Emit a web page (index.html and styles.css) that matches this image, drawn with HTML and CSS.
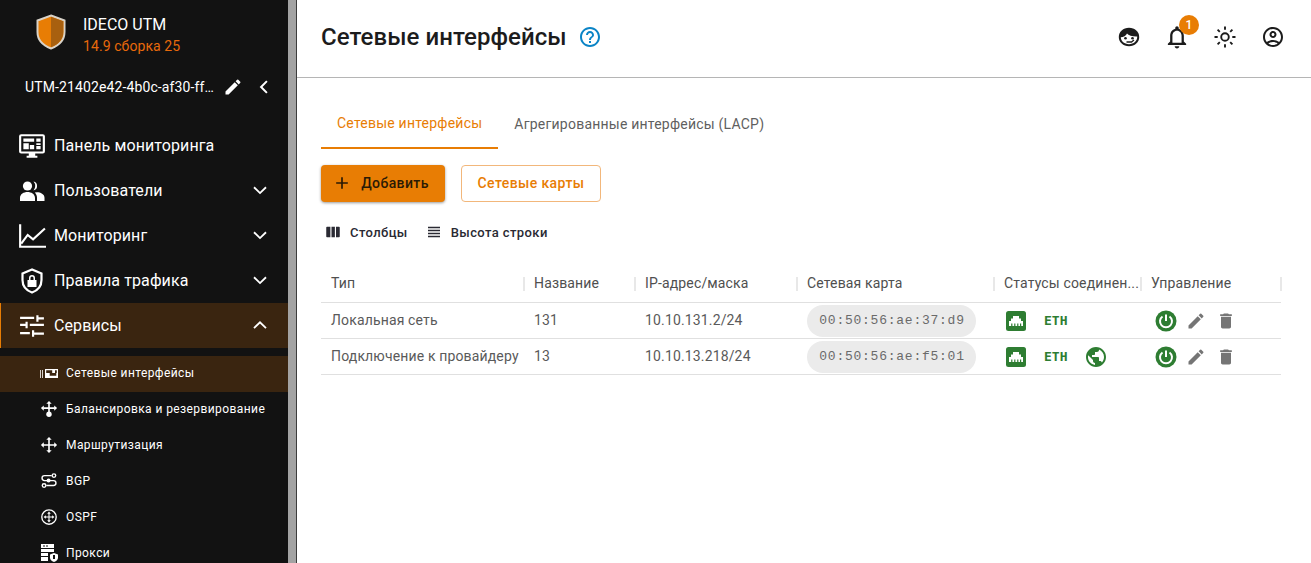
FILE: index.html
```html
<!DOCTYPE html>
<html lang="ru">
<head>
<meta charset="utf-8">
<title>Сетевые интерфейсы</title>
<link rel="stylesheet" href="styles.css">
</head>
<body>
<div class="app">
  <aside class="sidebar">
    <div class="brand">
      <svg class="logo" width="30" height="36" viewBox="0 0 30 36"><path d="M15 1.500 28.500 6.500V18c0 8-5.500 13.500-13.500 16.500C7 31.500 1.500 26 1.500 18V6.500Z" fill="#e87d04" stroke="#d8d2c8" stroke-width="2"/><path d="M15 2.800 27.300 7.300V18c0 7.300-5 12.500-12.300 15.200Z" fill="#a8600f"/></svg>
      <div class="brand-text">
        <div class="brand-name">IDECO UTM</div>
        <div class="brand-ver">14.9 сборка 25</div>
      </div>
    </div>
    <div class="host">
      <span class="host-name">UTM-21402e42-4b0c-af30-ff…</span>
      <svg class="ico20" viewBox="0 0 24 24"><path fill="#fff" d="M3 17.250V21h3.750L17.810 9.940l-3.750-3.750L3 17.250zM20.710 7.040a1 1 0 0 0 0-1.410l-2.340-2.340a1 1 0 0 0-1.410 0l-1.830 1.830 3.750 3.750 1.830-1.830z"/></svg>
      <svg class="ico20 host-back" viewBox="0 0 24 24"><path fill="none" stroke="#fff" stroke-width="2.400" d="M15.500 5 8.500 12l7 7"/></svg>
    </div>
    <nav class="nav">
      <a class="nav-item">
        <svg class="nav-ico" viewBox="0 0 26 24"><path fill="#fff" d="M3 1h20a2 2 0 0 1 2 2v14a2 2 0 0 1-2 2h-7v2h2v2H8v-2h2v-2H3a2 2 0 0 1-2-2V3a2 2 0 0 1 2-2zm0 2v14h20V3z"/><path fill="#fff" d="M5 5h10v3H5zM17 5h4v3h-4zM17 9.500h4V11h-4zM17 12h4v3h-4zM5 9.500h5V15H5zM11 11h4v4h-4z"/></svg>
        <span class="nav-label">Панель мониторинга</span>
      </a>
      <a class="nav-item">
        <svg class="nav-ico" viewBox="0 0 28 26"><circle cx="9.500" cy="8" r="4.600" fill="#fff"/><path fill="#fff" d="M15.500 3.600a4.500 4.500 0 0 1 0 8.800 6.500 6.500 0 0 0 0-8.800zM2 23v-3c0-4 3.800-6 7.500-6s7.500 2 7.500 6v3zM19 14.300c3.500 0 7.500 1.900 7.500 5.500V23H19v-3.200c0-2-.700-3.900-2.200-5.300z"/></svg>
        <span class="nav-label">Пользователи</span>
        <svg class="chev" viewBox="0 0 24 24"><path fill="none" stroke="#fff" stroke-width="2.200" d="M4.800 7.500 12 14.500l7.200-7"/></svg>
      </a>
      <a class="nav-item">
        <svg class="nav-ico" viewBox="0 0 26 24"><path fill="none" stroke="#fff" stroke-width="2" d="M2 1v21h24"/><path fill="none" stroke="#fff" stroke-width="2" d="M3 19l6-8 5 4L25 5"/></svg>
        <span class="nav-label">Мониторинг</span>
        <svg class="chev" viewBox="0 0 24 24"><path fill="none" stroke="#fff" stroke-width="2.200" d="M4.800 7.500 12 14.500l7.200-7"/></svg>
      </a>
      <a class="nav-item">
        <svg class="nav-ico" viewBox="0 0 24 26"><path fill="none" stroke="#fff" stroke-width="2.200" d="M12 1.500 2.500 5.500v6.500c0 6 4 10.500 9.500 12.500 5.500-2 9.500-6.500 9.500-12.500V5.500Z"/><path fill="#fff" d="M7.500 12h9v7h-9zM9 12V10a3 3 0 0 1 6 0v2h-1.500v-2a1.500 1.500 0 0 0-3 0v2z"/></svg>
        <span class="nav-label">Правила трафика</span>
        <svg class="chev" viewBox="0 0 24 24"><path fill="none" stroke="#fff" stroke-width="2.200" d="M4.800 7.500 12 14.500l7.200-7"/></svg>
      </a>
      <a class="nav-item nav-active">
        <svg class="nav-ico" viewBox="0 0 24 24"><path fill="#fff" d="M1 18.500v2h9v-2zM1 4.500v2h13v-2zM14 23v-2h9v-2h-9v-2h-2v6zM6 9v2H1v2h5v2h2V9zM23 13v-2H10v2zM16 9h2V7h5V5h-5V3h-2z" transform="translate(0 -1)"/></svg>
        <span class="nav-label">Сервисы</span>
        <svg class="chev" viewBox="0 0 24 24"><path fill="none" stroke="#fff" stroke-width="2.200" d="M4.800 14.500 12 7.500l7.200 7"/></svg>
      </a>
    </nav>
    <div class="subnav">
      <a class="sub-item sub-active">
        <svg class="sub-ico" viewBox="0 0 18 12"><path fill="#d8d2cc" d="M0 3h1v8H0zM2 3h1v8H2z"/><path fill="#fff" fill-rule="evenodd" d="M5 2h13v9H5zM6.200 3.200V6h3.500v2.800h6.600V6h.500V3.200h-1.800V6h-2.800V3.200z"/></svg>
        <span>Сетевые интерфейсы</span>
      </a>
      <a class="sub-item">
        <svg class="sub-ico" viewBox="-1 -1 20 20"><g fill="none" stroke="#fff" stroke-width="1.800"><path d="M9 2v12M2.500 8h13"/></g><path fill="#fff" d="M9 0l3 3.200H6zM0 8l3.200-3v6zM18 8l-3.200-3v6z"/><circle cx="9" cy="14.800" r="3" fill="#fff"/></svg>
        <span>Балансировка и резервирование</span>
      </a>
      <a class="sub-item">
        <svg class="sub-ico" viewBox="-1 -1 20 20"><g fill="none" stroke="#fff" stroke-width="1.800"><path d="M9 2v14M2 9h14"/></g><path fill="#fff" d="M9 0l3 3.200H6zM9 18l3-3.200H6zM0 9l3.200-3v6zM18 9l-3.200-3v6z"/></svg>
        <span>Маршрутизация</span>
      </a>
      <a class="sub-item">
        <svg class="sub-ico" viewBox="-1 -1 20 20"><g fill="none" stroke="#fff" stroke-width="1.500"><path d="M12 3H4a2.500 2.500 0 0 0 0 5.500h10a2.700 2.700 0 0 1 0 5.500H6"/><circle cx="14.500" cy="3" r="2"/><circle cx="3.500" cy="14" r="2"/></g><circle cx="8.500" cy="8.500" r="2.200" fill="#fff"/></svg>
        <span>BGP</span>
      </a>
      <a class="sub-item">
        <svg class="sub-ico" viewBox="-1 -1 20 20"><circle cx="9" cy="9" r="8" fill="none" stroke="#fff" stroke-width="1.500"/><path fill="#fff" d="M9 3l2 2.500H9.600v2.900h2.900V7L15 9l-2.500 2v-1.400H9.600v2.900H11L9 15l-2-2.500h1.400V9.600H5.500V11L3 9l2.500-2v1.400h2.900V5.500H7z"/></svg>
        <span>OSPF</span>
      </a>
      <a class="sub-item">
        <svg class="sub-ico" viewBox="0 0 18 18"><path fill="#fff" d="M1 0h13v4H1zM1 5h13v3H1zM1 9h7v3H1zM1 13h7v4H1z"/><path fill="#fff" d="M14 9l4 1.500v3c0 2-1.500 3.500-4 4.500-2.500-1-4-2.500-4-4.500v-3z"/><path fill="#121212" d="M13 11h2v4h-2zM3 1.500h2v1H3zM6 1.500h2v1H6z"/></svg>
        <span>Прокси</span>
      </a>
    </div>
  </aside>
  <div class="scrollbar"></div>
  <main class="main">
    <header class="topbar">
      <h1 class="title">Сетевые интерфейсы</h1>
      <svg class="help" viewBox="0 0 24 24"><path fill="#0b84c6" d="M11 18h2v-2h-2v2zm1-16C6.480 2 2 6.480 2 12s4.480 10 10 10 10-4.480 10-10S17.520 2 12 2zm0 18c-4.410 0-8-3.590-8-8s3.590-8 8-8 8 3.590 8 8-3.590 8-8 8zm0-14c-2.210 0-4 1.790-4 4h2c0-1.100.900-2 2-2s2 .900 2 2c0 2-3 1.750-3 5h2c0-2.250 3-2.500 3-5 0-2.210-1.790-4-4-4z"/></svg>
      <div class="top-actions">
        <svg class="top-ico" viewBox="0 0 24 24"><path fill="#1c1c1c" d="M12 2.800C6.200 2.800 1.800 6.800 1.800 12S6.200 21.200 12 21.200 22.200 17.200 22.200 12 17.800 2.800 12 2.800z"/><path fill="#fff" d="M3.800 12.300c2.800-.3 5.200-1.500 6.200-3.800 1.700 2 5.400 3.200 10.200 3 .3 4.300-3.500 7.700-8.200 7.700s-8-3-8.200-6.900z"/><circle cx="8.500" cy="13.200" r="1.300" fill="#1c1c1c"/><circle cx="15.500" cy="13.200" r="1.300" fill="#1c1c1c"/><path fill="none" stroke="#1c1c1c" stroke-width="1.300" d="M9.500 17h5l2.500-2"/></svg>
        <span class="bell">
          <svg class="top-ico" viewBox="1.500 1.500 21 21"><path fill="#1c1c1c" d="M12 22c1.100 0 2-.900 2-2h-4c0 1.100.900 2 2 2zm6-6v-5c0-3.070-1.630-5.640-4.500-6.320V4c0-.830-.670-1.500-1.500-1.500s-1.500.670-1.500 1.500v.680C7.640 5.360 6 7.920 6 11v5l-2 2v1h16v-1l-2-2zm-2 1H8v-6c0-2.480 1.510-4.500 4-4.500s4 2.020 4 4.500v6z"/></svg>
          <span class="badge">1</span>
        </span>
        <svg class="top-ico" viewBox="0 0 24 24"><circle cx="12" cy="12" r="3.800" fill="none" stroke="#1c1c1c" stroke-width="1.900"/><path fill="none" stroke="#1c1c1c" stroke-width="1.900" d="M12 1.500v3.200M12 19.300v3.200M1.500 12h3.200M19.300 12h3.200M4.600 4.600l2.200 2.200M17.200 17.200l2.200 2.200M4.600 19.400l2.200-2.200M17.200 6.800l2.200-2.200"/></svg>
        <svg class="top-ico" viewBox="0 0 24 24"><path fill="#1c1c1c" d="M12 2C6.480 2 2 6.480 2 12s4.480 10 10 10 10-4.480 10-10S17.520 2 12 2zM7.350 18.500C8.660 17.560 10.260 17 12 17s3.340.560 4.650 1.500c-1.310.940-2.910 1.500-4.650 1.500s-3.340-.560-4.650-1.500zm10.790-1.380C16.450 15.800 14.320 15 12 15s-4.450.800-6.140 2.120C4.700 15.730 4 13.950 4 12c0-4.420 3.580-8 8-8s8 3.580 8 8c0 1.950-.700 3.730-1.860 5.120zM12 6c-1.930 0-3.500 1.570-3.500 3.500S10.070 13 12 13s3.500-1.570 3.500-3.500S13.930 6 12 6zm0 5c-.830 0-1.500-.670-1.500-1.500S11.170 8 12 8s1.500.670 1.500 1.500S12.830 11 12 11z"/></svg>
      </div>
    </header>
    <section class="content">
      <div class="tabs">
        <a class="tab tab-active">Сетевые интерфейсы</a>
        <a class="tab">Агрегированные интерфейсы (LACP)</a>
      </div>
      <div class="buttons">
        <button class="btn btn-primary">
          <svg class="ico20" viewBox="0 0 24 24"><path fill="#2a1a05" d="M19 13h-6v6h-2v-6H5v-2h6V5h2v6h6v2z"/></svg>
          <span>Добавить</span>
        </button>
        <button class="btn btn-outline">Сетевые карты</button>
      </div>
      <div class="toolbar">
        <a class="tool">
          <svg class="tool-ico" viewBox="0 0 24 24"><path fill="#2a2a33" d="M4 5h4.500v14H4a1 1 0 0 1-1-1V6a1 1 0 0 1 1-1zM10 5h4.500v14H10zM16 5h4a1 1 0 0 1 1 1v12a1 1 0 0 1-1 1h-4z"/></svg>
          <span>Столбцы</span>
        </a>
        <a class="tool">
          <svg class="tool-ico" viewBox="0 0 24 24"><path fill="#2a2a33" d="M4 15h16v-2H4v2zm0 4h16v-2H4v2zm0-8h16V9H4v2zm0-6v2h16V5H4z"/></svg>
          <span>Высота строки</span>
        </a>
      </div>
      <div class="grid">
        <div class="row row-head">
          <div class="cell">Тип</div>
          <div class="cell">Название</div>
          <div class="cell">IP-адрес/маска</div>
          <div class="cell">Сетевая карта</div>
          <div class="cell">Статусы соединен...</div>
          <div class="cell">Управление</div>
        </div>
        <div class="row">
          <div class="cell">Локальная сеть</div>
          <div class="cell">131</div>
          <div class="cell">10.10.131.2/24</div>
          <div class="cell cell-flush"><span class="chip">00:50:56:ae:37:d9</span></div>
          <div class="cell cell-flush status">
            <svg class="st-port" viewBox="0 0 20 20"><rect width="20" height="20" rx="2.500" fill="#2e7d32"/><path fill="#fff" d="M7 5h6v2.500h2V10h2v5H3v-5h2V7.500h2z"/><path fill="#2e7d32" d="M5.200 12.500h1.200V15H5.200zM8.200 12.500h1.200V15H8.200zM11.200 12.500h1.200V15h-1.200zM14 12.500h1.200V15H14z"/></svg>
            <span class="eth">ETH</span>
          </div>
          <div class="cell cell-flush actions">
            <svg class="act-power" viewBox="0 0 22 22"><circle cx="11" cy="11" r="10.500" fill="#2e7d32"/><path fill="none" stroke="#fff" stroke-width="2" d="M11 4.500v6.500M7.500 6.500a6 6 0 1 0 7 0"/></svg>
            <svg class="act-ico" viewBox="0 0 24 24"><path fill="#757575" d="M3 17.250V21h3.750L17.810 9.940l-3.750-3.750L3 17.250zM20.710 7.040a1 1 0 0 0 0-1.410l-2.340-2.340a1 1 0 0 0-1.410 0l-1.830 1.830 3.750 3.750 1.830-1.830z"/></svg>
            <svg class="act-ico act-trash" viewBox="0 0 24 24"><path fill="#757575" d="M6 19c0 1.100.900 2 2 2h8c1.100 0 2-.900 2-2V7H6v12zM19 4h-3.500l-1-1h-5l-1 1H5v2h14V4z"/></svg>
          </div>
        </div>
        <div class="row">
          <div class="cell">Подключение к провайдеру</div>
          <div class="cell">13</div>
          <div class="cell">10.10.13.218/24</div>
          <div class="cell cell-flush"><span class="chip">00:50:56:ae:f5:01</span></div>
          <div class="cell cell-flush status">
            <svg class="st-port" viewBox="0 0 20 20"><rect width="20" height="20" rx="2.500" fill="#2e7d32"/><path fill="#fff" d="M7 5h6v2.500h2V10h2v5H3v-5h2V7.500h2z"/><path fill="#2e7d32" d="M5.200 12.500h1.200V15H5.200zM8.200 12.500h1.200V15H8.200zM11.200 12.500h1.200V15h-1.200zM14 12.500h1.200V15H14z"/></svg>
            <span class="eth">ETH</span>
            <svg class="st-globe" viewBox="0 0 24 24"><path fill="#2e7d32" d="M12 2C6.480 2 2 6.480 2 12s4.480 10 10 10 10-4.480 10-10S17.520 2 12 2zm-1 17.930c-3.950-.490-7-3.850-7-7.930 0-.620.080-1.210.210-1.790L9 15v1c0 1.100.900 2 2 2v1.930zm6.900-2.540c-.260-.810-1-1.390-1.900-1.390h-1v-3c0-.550-.450-1-1-1H8v-2h2c.550 0 1-.450 1-1V7h2c1.100 0 2-.900 2-2v-.410c2.930 1.190 5 4.060 5 7.410 0 2.080-.800 3.970-2.100 5.390z"/></svg>
          </div>
          <div class="cell cell-flush actions">
            <svg class="act-power" viewBox="0 0 22 22"><circle cx="11" cy="11" r="10.500" fill="#2e7d32"/><path fill="none" stroke="#fff" stroke-width="2" d="M11 4.500v6.500M7.500 6.500a6 6 0 1 0 7 0"/></svg>
            <svg class="act-ico" viewBox="0 0 24 24"><path fill="#757575" d="M3 17.250V21h3.750L17.810 9.940l-3.750-3.750L3 17.250zM20.710 7.040a1 1 0 0 0 0-1.410l-2.340-2.340a1 1 0 0 0-1.410 0l-1.830 1.830 3.750 3.750 1.830-1.830z"/></svg>
            <svg class="act-ico act-trash" viewBox="0 0 24 24"><path fill="#757575" d="M6 19c0 1.100.900 2 2 2h8c1.100 0 2-.900 2-2V7H6v12zM19 4h-3.500l-1-1h-5l-1 1H5v2h14V4z"/></svg>
          </div>
        </div>
      </div>
    </section>
  </main>
</div>
</body>
</html>
```
FILE: styles.css
```css
* { box-sizing: border-box; }
html, body { margin: 0; height: 100%; overflow: hidden; }
body { font-family: Roboto, "Noto Sans", sans-serif; background: #fff; color: #1c1c1c; }
.app { display: flex; height: 563px; overflow: hidden; }

.sidebar { width: 288px; flex: none; background: #121212; color: #fff; overflow: hidden; }
.brand { display: flex; align-items: flex-start; padding-top: 14px; padding-left: 36px; height: 68px; }
.logo { flex: none; display: block; }
.brand-text { margin-left: 17px; margin-top: 1px; }
.brand-name { font-size: 16px; line-height: 20px; }
.brand-ver { font-size: 14px; line-height: 20px; margin-top: 1px; color: #e8690b; letter-spacing: .08px; }
.host { display: flex; align-items: center; height: 38px; padding-left: 25px; }
.host-name { font-size: 14px; width: 198px; white-space: nowrap; letter-spacing: .12px; }
.ico20 { width: 20px; height: 20px; display: block; flex: none; }
.host-back { margin-left: 11px; }
.nav { margin-top: 17px; }
.nav-item { display: flex; align-items: center; height: 45px; padding-left: 18px; }
.nav-ico { width: 28px; height: 26px; flex: none; display: block; }
.nav-label { margin-left: 8px; font-size: 16px; flex: 1; letter-spacing: .1px; }
.chev { width: 20px; height: 20px; margin-right: 18px; flex: none; }
.nav-active { background: #3a2510; border-left: 1px solid #e87d04; padding-left: 17px; }
.subnav { margin-top: 8px; }
.sub-item { display: flex; align-items: center; height: 36px; padding-left: 40px; padding-bottom: 2px; font-size: 12px; letter-spacing: .41px; font-weight: 400; }
.sub-ico { width: 18px; height: 18px; flex: none; display: block; margin-right: 8px; }
.sub-active { background: #3a2510; }

.scrollbar { width: 8px; flex: none; background: #a3a3a3; }
.main { flex: 1; min-width: 0; border-left: 1px solid #3c3c3c; }
.topbar { display: flex; align-items: center; height: 78px; padding-left: 24px; padding-bottom: 3px; border-bottom: 1px solid #b5b5b5; }
.title { margin: 0; font-size: 24px; font-weight: 500; line-height: 32px; letter-spacing: .05px; }
.help { width: 24px; height: 24px; margin-left: 11px; }
.top-actions { margin-left: auto; display: flex; align-items: center; gap: 24px; padding-right: 26px; }
.top-ico { width: 24px; height: 24px; display: block; }
.bell { position: relative; display: block; }
.badge { position: absolute; top: -10px; right: -10px; width: 20px; height: 20px; border-radius: 50%; background: #e87d04; color: #fff; font-size: 12px; font-weight: 500; display: flex; align-items: center; justify-content: center; }

.content { padding: 22px 30px 0 24px; }
.tabs { display: flex; height: 49px; }
.tab { display: flex; align-items: center; padding: 0 16px 2px; font-size: 14px; color: #5f5f5f; letter-spacing: .22px; }
.tab-active { color: #e87d04; border-bottom: 2px solid #e87d04; }
.buttons { display: flex; gap: 16px; margin-top: 16px; }
.btn { font-family: inherit; font-size: 14px; font-weight: 500; letter-spacing: .4px; height: 37px; border-radius: 4px; display: flex; align-items: center; justify-content: center; padding: 0 0 2px; }
.btn-primary { width: 124px; background: #e87d04; border: 0; color: #2a1a05; gap: 9px; box-shadow: 0 1px 3px rgba(0,0,0,.4); padding-right: 5px; }
.btn-outline { width: 140px; background: #fff; border: 1px solid #f2b77b; color: #e87d04; }
.toolbar { display: flex; gap: 17px; margin-top: 19px; height: 24px; align-items: center; padding-left: 3px; padding-bottom: 2px; }
.tool { display: flex; align-items: center; gap: 8px; font-size: 13px; font-weight: 500; letter-spacing: .4px; color: #2a2a33; }
.tool-ico { width: 18px; height: 18px; display: block; }

.grid { margin-top: 21px; width: 960px; font-size: 14px; color: #5a5a5a; letter-spacing: .15px; }
.row { display: grid; grid-template-columns: 203px 111px 162px 197px 147px 140px; height: 36px; border-bottom: 1px solid #e0e0e0; align-items: center; }
.row-head { height: 37px; letter-spacing: .15px; color: #4f4f4f; padding-bottom: 1px; }
.row-head .cell { height: 14px; line-height: 12px; padding-bottom: 0; margin-right: -1px; border-right: 2px solid #e8e8e8; overflow: visible; }
.cell { padding-left: 10px; padding-bottom: 2px; white-space: nowrap; overflow: hidden; }
.cell-flush { padding-bottom: 0; }
.chip { display: inline-flex; align-items: center; justify-content: center; width: 169px; height: 32px; padding-left: 1px; border-radius: 16px; background: #ebebeb; font-family: "Liberation Mono", monospace; font-size: 13px; letter-spacing: .75px; color: #6a6a6a; }
.status { display: flex; align-items: center; }
.st-port { width: 20px; height: 20px; flex: none; margin-left: 2px; }
.eth { font-family: "DejaVu Sans Mono", monospace; font-weight: 700; font-size: 13px; letter-spacing: 0; color: #2e7d32; margin-left: 18px; width: 24px; flex: none; }
.st-globe { width: 24px; height: 24px; flex: none; margin-left: 16px; }
.actions { display: flex; align-items: center; }
.act-power { width: 22px; height: 22px; flex: none; margin-left: 4px; }
.act-ico { width: 20px; height: 20px; flex: none; margin-left: 9px; }
.act-trash { margin-left: 10px; }
```
